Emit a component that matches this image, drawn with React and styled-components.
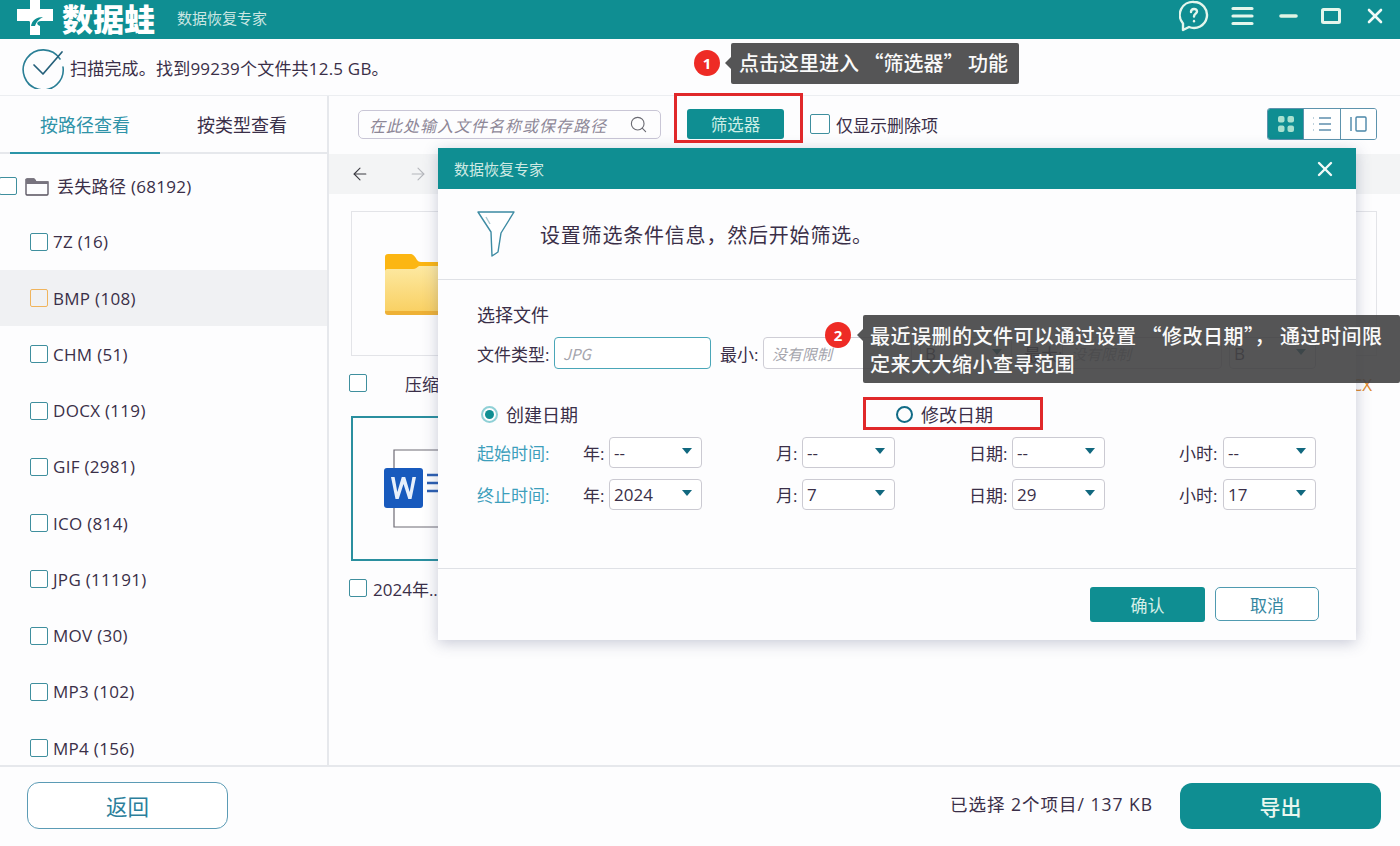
import React from 'react';
import styled, { createGlobalStyle } from 'styled-components';
import { ArrowLeft, ArrowRight, Search, X } from 'lucide-react';

const TEAL = '#0f8e92';
const INK = '#3a2f48';

const Global = createGlobalStyle`
  html, body { margin: 0; padding: 0; background: #fff; }
  * { box-sizing: border-box; }
  body { font-family: "Open Sans", "Noto Sans CJK SC", sans-serif; color: ${INK}; }
`;

const Page = styled.div`
  position: relative; width: 1400px; height: 846px; overflow: hidden;
  display: flex; flex-direction: column; background: #fdfdfe;
`;
const TitleBar = styled.header`
  height: 39px; flex: none; background: ${TEAL}; display: flex; align-items: center;
  padding: 0 13px 0 17px; color: #e4f6ec;
`;
const LogoName = styled.span`
  font-size: 31px; font-weight: 900; color: #fff; line-height: 32px; margin: -4px 0 0 9px;
  font-family: "Noto Sans CJK SC", sans-serif;
`;
const AppName = styled.span`
  font-size: 15px; margin-left: 22px; color: #cbe6e2; margin-top: -4px;
`;
const WinButtons = styled.div`
  margin-left: auto; display: flex; align-items: center; gap: 20px; margin-top: -7px;
`;
const StatusBar = styled.div`
  height: 57px; flex: none; display: flex; align-items: center; padding-left: 22px; gap: 4px;
  border-bottom: 1px solid #eceef1; font-size: 17px; letter-spacing: .2px;
`;
const Main = styled.div`flex: 1; min-height: 0; display: flex;`;
const Sidebar = styled.aside`
  width: 329px; flex: none; border-right: 2px solid #e6e8ec; display: flex; flex-direction: column;
`;
const Tabs = styled.div`
  height: 58px; flex: none; display: flex; gap: 7px; padding-left: 10px; border-bottom: 2px solid #e6e8ec;
`;
const Tab = styled.div`
  width: 150px; height: 58px; display: flex; align-items: center; justify-content: center;
  font-size: 18px; color: ${p => (p.$active ? '#2f93a8' : INK)};
  border-bottom: 2px solid ${p => (p.$active ? '#2b95a8' : 'transparent')};
`;
const TreeList = styled.div`flex: 1; min-height: 0; overflow: hidden; padding-top: 3.5px;`;
const TreeRow = styled.div`
  height: 56.25px; display: flex; align-items: center; gap: ${p => (p.$root ? '8px' : '5px')};
  padding-left: ${p => (p.$root ? '0' : '30px')}; font-size: 17px; letter-spacing: .3px;
  background: ${p => (p.$hover ? '#f0f1f3' : 'transparent')};
`;
const Check = styled.span`
  flex: none; display: block; width: ${p => p.$size || 18}px; height: ${p => p.$size || 18}px;
  border: 1.5px solid ${p => p.$color || '#3f8f9e'}; border-radius: 2px;
  background: ${p => (p.$color ? 'transparent' : '#fff')};
`;
const Content = styled.section`flex: 1; min-width: 0; display: flex; flex-direction: column;`;
const Toolbar = styled.div`
  height: 58px; flex: none; display: flex; align-items: center; padding: 0 23px 0 29px;
`;
const SearchBox = styled.div`
  width: 303px; height: 29px; display: flex; align-items: center; padding: 0 12px 0 10px;
  border: 1px solid #c9c6d6; border-radius: 5px; margin-top: -1px; color: #6a6a72;
`;
const SearchInput = styled.input`
  flex: 1; min-width: 0; border: 0; outline: 0; background: transparent; padding: 0;
  font: italic 16px "Noto Sans CJK SC", sans-serif; letter-spacing: 1px;
  &::placeholder { color: #8d8797; opacity: 1; }
`;
const FilterButton = styled.button`
  width: 97px; height: 30px; margin: -2px 26px 0; border: 0; border-radius: 3px; background: ${TEAL};
  color: #cdeee6; font: 16.5px "Noto Sans CJK SC", sans-serif; padding: 0;
`;
const OnlyDeleted = styled.label`
  display: flex; align-items: center; gap: 6px; font-size: 17px; margin-top: -2px;
`;
const ViewToggle = styled.div`
  margin-left: auto; display: flex; width: 110px; height: 32px; margin-top: -2px;
  border: 1px solid #5d93ad; border-radius: 3px; overflow: hidden;
`;
const ViewButton = styled.div`
  flex: 1; display: flex; align-items: center; justify-content: center;
  background: ${p => (p.$active ? TEAL : '#fff')};
  & + & { border-left: 1px solid #5d93ad; }
`;
const NavBar = styled.div`
  height: 40px; flex: none; background: #f3f4f5; display: flex; align-items: center; gap: 38px; padding-left: 21px;
`;
const Files = styled.div`padding: 17px 23px 0 22px; display: flex; flex-direction: column;`;
const CardRow = styled.div`display: flex; justify-content: space-between;`;
const Cell = styled.div`width: 190px; display: flex; flex-direction: column;`;
const Card = styled.div`
  height: 145px; display: flex; align-items: center; padding-left: ${p => p.$pad}px;
  border: ${p => (p.$selected ? '2px solid #2a8f9f' : '1px solid #e3e4e8')};
`;
const FileLabel = styled.div`
  height: 18px; margin: 18px 0 24px -2px; display: flex; align-items: center; font-size: 17px;
  gap: ${p => p.$gap || 6}px; white-space: nowrap; color: ${p => p.$color || INK};
  justify-content: ${p => (p.$end ? 'flex-end' : 'flex-start')}; padding-right: ${p => (p.$end ? '5px' : '0')};
`;
const Footer = styled.footer`
  height: 81px; flex: none; border-top: 2px solid #e6e8ec; display: flex; align-items: center;
  padding: 0 19px 2px 27px;
`;
const BackButton = styled.button`
  width: 201px; height: 47px; border: 1.5px solid #5b9bb5; border-radius: 12px; background: #fff;
  font: 21.5px "Noto Sans CJK SC", sans-serif; color: #2c7f9c; padding: 0;
`;
const Selected = styled.span`margin-left: auto; font-size: 17.5px; letter-spacing: 1px; margin-right: 27px; margin-top: -4px;`;
const ExportButton = styled.button`
  width: 201px; height: 46px; border: 0; border-radius: 12px; background: ${TEAL};
  font: 500 21px "Noto Sans CJK SC", sans-serif; color: #e9f7ef; padding: 0;
`;

/* dialog */
const Dialog = styled.div`
  position: absolute; left: 438px; top: 148px; width: 918px; height: 492px; background: #fdfdfe;
  display: flex; flex-direction: column; box-shadow: 0 3px 14px rgba(60, 70, 110, .28);
`;
const DialogHead = styled.div`
  height: 41px; flex: none; background: ${TEAL}; color: #cfeae4; display: flex; align-items: center;
  justify-content: space-between; padding: 0 19px 0 16px; font-size: 15px;
`;
const DialogIntro = styled.div`
  height: 91px; flex: none; display: flex; align-items: center; gap: 25px; padding: 0 0 0 39px;
  border-bottom: 1px solid #dfe1e6; font-size: 20px; letter-spacing: .8px;
`;
const DialogBody = styled.div`
  flex: 1; min-height: 0; padding: 25px 40px 0 39px; display: flex; flex-direction: column;
  border-bottom: 1px solid #dfe1e6;
`;
const SectionTitle = styled.div`font-size: 18px; line-height: 22px; height: 22px; margin-top: -1px; margin-bottom: 1px;`;
const FileRow = styled.div`height: 32px; margin-top: 10px; display: flex; align-items: center; font-size: 17px;`;
const FieldName = styled.span`white-space: nowrap; width: ${p => p.$w}px; flex: none;`;
const TextField = styled.div`
  flex: none; width: ${p => p.$w}px; height: 32px; margin-right: ${p => p.$mr || 0}px; padding-left: ${p => p.$pad || 8}px;
  display: flex; align-items: center; font-style: italic; color: #a5a5ad; font-size: 15px;
  font-family: "Noto Sans CJK SC", sans-serif; background: #fff;
  border: ${p => (p.$focus ? '1.5px solid #4aa6b8' : '1px solid #cfced6')}; border-radius: 4px;
`;
const RadioRow = styled.div`height: 24px; margin-top: 33px; display: flex; padding-left: 4px;`;
const RadioItem = styled.label`
  display: flex; align-items: center; gap: 8px; font-size: 18px; width: 415px;
`;
const Radio = styled.span`
  flex: none; width: 17px; height: 17px; border-radius: 50%; border: 2px solid ${p => (p.$on ? '#8fd0d6' : '#116b86')};
  display: flex; align-items: center; justify-content: center;
  &::after { content: ''; width: 9px; height: 9px; border-radius: 50%; background: ${p => (p.$on ? TEAL : 'transparent')}; }
`;
const DateRow = styled.div`height: 31px; margin-top: ${p => p.$mt}px; display: flex; align-items: center;`;
const DateLabel = styled.span`flex: none; width: 106px; font-size: 17px; color: #3d9fbc;`;
const DateFields = styled.div`flex: 1; display: flex; justify-content: space-between;`;
const DateField = styled.div`
  width: ${p => p.$w}px; display: flex; align-items: center; justify-content: space-between; font-size: 17px;
`;
const Select = styled.div`
  width: ${p => p.$w || 93}px; height: ${p => p.$h || 31}px; display: flex; align-items: center; justify-content: space-between;
  padding: 0 9px 0 4px; border: 1px solid #cbcad2; border-radius: 4px; background: #fff; font-size: 17px;
  &::after { content: ''; width: 0; height: 0; margin-top: -3px; border: 5.5px solid transparent; border-bottom: 0; border-top: 6px solid #11687f; }
`;
const DialogFoot = styled.div`
  height: 71px; flex: none; display: flex; align-items: center; justify-content: flex-end; gap: 10px; padding: 0 37px 1px 0;
`;
const OkButton = styled.button`
  width: 115px; height: 35px; border: 0; border-radius: 3px; background: ${TEAL}; color: #d5efe8;
  font: 17px "Noto Sans CJK SC", sans-serif; padding: 0;
`;
const CancelButton = styled.button`
  width: 104px; height: 34px; border: 1.5px solid #4f9ab0; border-radius: 5px; background: #fff; color: #35869f;
  font: 17px "Noto Sans CJK SC", sans-serif; padding: 0;
`;

/* annotations */
const Callout = styled.div`
  position: absolute; left: ${p => p.$x}px; top: ${p => p.$y}px; width: ${p => p.$w}px; height: ${p => p.$h}px;
  background: rgba(66, 66, 68, .9); color: #fafafa; font-size: 20px; font-weight: 500; border-radius: 2px;
  font-family: "Noto Sans CJK SC", sans-serif; letter-spacing: ${p => p.$spacing || 0}px;
  padding: ${p => p.$pad}; line-height: 28px;
  &::before {
    content: ''; position: absolute; left: -6px; top: ${p => p.$arrow}px; border: 6px solid transparent;
    border-left: 0; border-right-color: rgba(66, 66, 68, .9);
  }
`;
const Badge = styled.span`
  position: absolute; left: ${p => p.$x}px; top: ${p => p.$y}px; width: 26px; height: 26px; border-radius: 50%;
  background: #ee2b25; color: #fff; font: 700 15px "Open Sans", sans-serif; display: flex; align-items: center; justify-content: center;
`;
const RedBox = styled.div`
  position: absolute; left: ${p => p.$x}px; top: ${p => p.$y}px; width: ${p => p.$w}px; height: ${p => p.$h}px;
  border: 3px solid #e0282a;
`;

const Logo = () => (
  <svg width="36" height="39" viewBox="0 0 36 39" style={{ marginTop: -6 }}>
    <path d="M13 0h10v12h13v12H24c-3 0-5 2-3 4l2 1v9H13V25c0-1-1-1-2-1H0V12h13z" fill="#fff" />
    <path d="M14 29c1-6 6-9 12-9-4 2-7 5-8 9z" fill={TEAL} />
  </svg>
);
const HelpIcon = () => (
  <svg width="30" height="32" viewBox="0 0 30 32" fill="none" stroke="#e4f6ec" strokeWidth="2.4" strokeLinecap="round" strokeLinejoin="round">
    <path d="M15 2a13 13 0 1 1-5 25l-6 3 0-6.500A13 13 0 0 1 15 2z" />
    <path d="M12 12c0-4 6-4 6-.5 0 2-3 2.500-3 5" />
    <path d="M15 21v.2" />
  </svg>
);
const WinIcons = () => (
  <WinButtons>
    <span style={{ display: 'flex', marginRight: 2 }}><HelpIcon /></span>
    <svg width="23" height="20" viewBox="0 0 23 20" stroke="#e4f6ec" strokeWidth="3.200" strokeLinecap="round">
      <path d="M2 2.500h19M2 10h19M2 17.500h19" />
    </svg>
    <svg width="24" height="6" viewBox="0 0 24 6" stroke="#dff3e4" strokeWidth="3.600" strokeLinecap="round" style={{ marginLeft: 3 }}>
      <path d="M4 3h15" />
    </svg>
    <svg width="20" height="16" viewBox="0 0 20 16" fill="none" stroke="#e4f6ec" strokeWidth="3">
      <rect x="1.500" y="1.500" width="17" height="13" rx="1" />
    </svg>
    <X size={24} color="#f0faf6" strokeWidth={2.6} style={{ marginLeft: 2 }} />
  </WinButtons>
);
const CheckCircle = () => (
  <svg width="44" height="44" viewBox="0 0 44 44" fill="none" strokeLinecap="round">
    <path d="M38 14A20 20 0 1 0 41 22" stroke="#2a7f96" strokeWidth="1.600" />
    <path d="M12 20l9 9L40 7" stroke="#25607a" strokeWidth="1.700" strokeLinejoin="round" />
  </svg>
);
const FolderSmall = () => (
  <svg width="24" height="20" viewBox="0 0 24 20" fill="none" stroke="#55505c" strokeWidth="1.300">
    <path d="M1 3.500V18a1 1 0 0 0 1 1h20a1 1 0 0 0 1-1V6H11L9 3H2z" />
    <path d="M1 3h9l2 3h11v2H1z" fill="#77737e" stroke="none" />
  </svg>
);
const Funnel = () => (
  <svg width="38" height="48" viewBox="0 0 38 48" fill="none" stroke="#3d8ba3" strokeWidth="1.400" strokeLinejoin="round">
    <path d="M1 2h36L24 23l-3 19-6 4-1-24z" fill="#fff" />
    <path d="M9 7l4 7" stroke="#a9c8d0" />
  </svg>
);
const BigFolder = () => (
  <svg width="72" height="62" viewBox="0 0 72 62">
    <defs>
      <linearGradient id="fb" x1="0" y1="0" x2="0" y2="1">
        <stop offset="0" stopColor="#fde9a2" />
        <stop offset="1" stopColor="#f9cf60" />
      </linearGradient>
    </defs>
    <path d="M0 4a3 3 0 0 1 3-3h22c3 0 5 2 7 6 1 1 2 2 4 2h33v10H0z" fill="#fcb612" />
    <path d="M0 18c0-1 1-2 2-2h26c3 0 4-2 6-3h35a3 3 0 0 1 3 3v42a3 3 0 0 1-3 3H3a3 3 0 0 1-3-3z" fill="url(#fb)" />
    <path d="M0 58h72v1a3 3 0 0 1-3 3H3a3 3 0 0 1-3-3z" fill="#eeb136" />
  </svg>
);
const WordDoc = () => (
  <svg width="84" height="80" viewBox="0 0 84 80">
    <path d="M10 1h72v77H10z" fill="#fff" stroke="#6e6c75" strokeWidth="1.200" />
    <path d="M43 26h36M43 34h36M43 42h36" stroke="#2b5fb2" strokeWidth="2.500" />
    <rect x="0" y="19" width="39" height="40" rx="3" fill="#185abd" />
    <path d="M7 28l4.500 22h3.200L19.500 35l4.800 15h3.200L32 28h-3.600l-2.700 15-4.500-15h-3.400l-4.500 15-2.700-15z" fill="#e8f0fb" />
  </svg>
);
const GridIcon = () => (
  <svg width="18" height="18" viewBox="0 0 18 18" fill="#a9e0cf">
    <rect x="1" y="1" width="6.500" height="6.500" rx="2" /><rect x="10.500" y="1" width="6.500" height="6.500" rx="2" />
    <rect x="1" y="10.500" width="6.500" height="6.500" rx="2" /><rect x="10.500" y="10.500" width="6.500" height="6.500" rx="2" />
  </svg>
);
const ListIcon = () => (
  <svg width="20" height="16" viewBox="0 0 20 16" stroke="#5f8fad" strokeWidth="1.300">
    <path d="M7 2h12M7 8h12M7 14h12" />
    <path d="M1 2h2M1 8h2M1 14h2" strokeDasharray="1 1" stroke="#a9c4d2" />
  </svg>
);
const ColumnIcon = () => (
  <svg width="18" height="16" viewBox="0 0 18 16" fill="none" stroke="#4a86a8" strokeWidth="1.400">
    <path d="M2 1v14" />
    <rect x="7" y="1" width="10" height="14" rx="1" />
  </svg>
);

const tree = ['7Z (16)', 'BMP (108)', 'CHM (51)', 'DOCX (119)', 'GIF (2981)', 'ICO (814)', 'JPG (11191)', 'MOV (30)', 'MP3 (102)', 'MP4 (156)'];
const dateRows = [
  { label: '起始时间:', mt: 11, v: ['--', '--', '--', '--'] },
  { label: '终止时间:', mt: 11, v: ['2024', '7', '29', '17'] },
];
const dateParts = [['年:', 119], ['月:', 119], ['日期:', 136], ['小时:', 137]];

export default function App() {
  return (
    <Page>
      <Global />
      <TitleBar>
        <Logo />
        <LogoName>数据蛙</LogoName>
        <AppName>数据恢复专家</AppName>
        <WinIcons />
      </TitleBar>
      <StatusBar>
        <CheckCircle />
        <span>扫描完成。找到99239个文件共12.5 GB。</span>
      </StatusBar>
      <Main>
        <Sidebar>
          <Tabs>
            <Tab $active>按路径查看</Tab>
            <Tab>按类型查看</Tab>
          </Tabs>
          <TreeList>
            <TreeRow $root>
              <Check style={{ marginLeft: -1 }} />
              <FolderSmall />
              <span>丢失路径 (68192)</span>
            </TreeRow>
            {tree.map(t => (
              <TreeRow key={t} $hover={t.startsWith('BMP')}>
                <Check $color={t.startsWith('BMP') ? '#f0b45c' : undefined} />
                <span>{t}</span>
              </TreeRow>
            ))}
          </TreeList>
        </Sidebar>
        <Content>
          <Toolbar>
            <SearchBox>
              <SearchInput placeholder="在此处输入文件名称或保存路径" readOnly />
              <Search size={19} strokeWidth={1.4} />
            </SearchBox>
            <FilterButton>筛选器</FilterButton>
            <OnlyDeleted><Check $size={20} /><span>仅显示删除项</span></OnlyDeleted>
            <ViewToggle>
              <ViewButton $active><GridIcon /></ViewButton>
              <ViewButton><ListIcon /></ViewButton>
              <ViewButton><ColumnIcon /></ViewButton>
            </ViewToggle>
          </Toolbar>
          <NavBar>
            <ArrowLeft size={20} strokeWidth={1.3} color="#3b3b42" />
            <ArrowRight size={20} strokeWidth={1.3} color="#b4b6bb" />
          </NavBar>
          <Files>
            <CardRow>
              <Cell>
                <Card $pad={33}><BigFolder /></Card>
                <FileLabel $gap={38}><Check /><span>压缩文件</span></FileLabel>
              </Cell>
              <Cell>
                <Card $pad={33} />
              </Cell>
              <Cell>
                <Card $pad={33} />
              </Cell>
              <Cell>
                <Card $pad={33} />
                <FileLabel $end $color="#e08a2c">文档.DOCX</FileLabel>
              </Cell>
            </CardRow>
            <CardRow>
              <Cell>
                <Card $pad={31} $selected><WordDoc /></Card>
                <FileLabel><Check /><span>2024年..</span></FileLabel>
              </Cell>
            </CardRow>
          </Files>
        </Content>
      </Main>
      <Footer>
        <BackButton>返回</BackButton>
        <Selected>已选择 2个项目/ 137 KB</Selected>
        <ExportButton>导出</ExportButton>
      </Footer>

      <Dialog>
        <DialogHead>
          <span>数据恢复专家</span>
          <X size={24} strokeWidth={2.4} color="#f2faf8" />
        </DialogHead>
        <DialogIntro>
          <Funnel />
          <span>设置筛选条件信息，然后开始筛选。</span>
        </DialogIntro>
        <DialogBody>
          <SectionTitle>选择文件</SectionTitle>
          <FileRow>
            <FieldName $w={77}>文件类型:</FieldName>
            <TextField $w={157} $mr={9} $focus>JPG</TextField>
            <FieldName $w={43}>最小:</FieldName>
            <TextField $w={149} $mr={8}>没有限制</TextField>
            <Select $w={92} $h={32}>B</Select>
            <FieldName $w={50} style={{ paddingLeft: 12 }}>最大:</FieldName>
            <TextField $w={160} $mr={7} $pad={8}>没有限制</TextField>
            <Select $w={87} $h={32}>B</Select>
          </FileRow>
          <RadioRow>
            <RadioItem><Radio $on /><span>创建日期</span></RadioItem>
            <RadioItem><Radio /><span>修改日期</span></RadioItem>
          </RadioRow>
          {dateRows.map(r => (
            <DateRow key={r.label} $mt={r.mt}>
              <DateLabel>{r.label}</DateLabel>
              <DateFields>
                {dateParts.map(([name, w], i) => (
                  <DateField key={name} $w={w}>
                    <span>{name}</span>
                    <Select>{r.v[i]}</Select>
                  </DateField>
                ))}
              </DateFields>
            </DateRow>
          ))}
        </DialogBody>
        <DialogFoot>
          <OkButton>确认</OkButton>
          <CancelButton>取消</CancelButton>
        </DialogFoot>
      </Dialog>

      <RedBox $x={674} $y={93} $w={129} $h={50} />
      <RedBox $x={863} $y={397} $w={180} $h={33} />
      <Badge $x={694} $y={50}>1</Badge>
      <Callout $x={731} $y={43} $w={288} $h={41} $arrow={14} $pad="6px 0 0 8px">点击这里进入 “筛选器” 功能</Callout>
      <Badge $x={825} $y={322}>2</Badge>
      <Callout $x={863} $y={315} $w={537} $h={68} $arrow={14} $spacing={0.5} $pad="7px 14px 0 7px">最近误删的文件可以通过设置 “修改日期”， 通过时间限定来大大缩小查寻范围</Callout>
    </Page>
  );
}
